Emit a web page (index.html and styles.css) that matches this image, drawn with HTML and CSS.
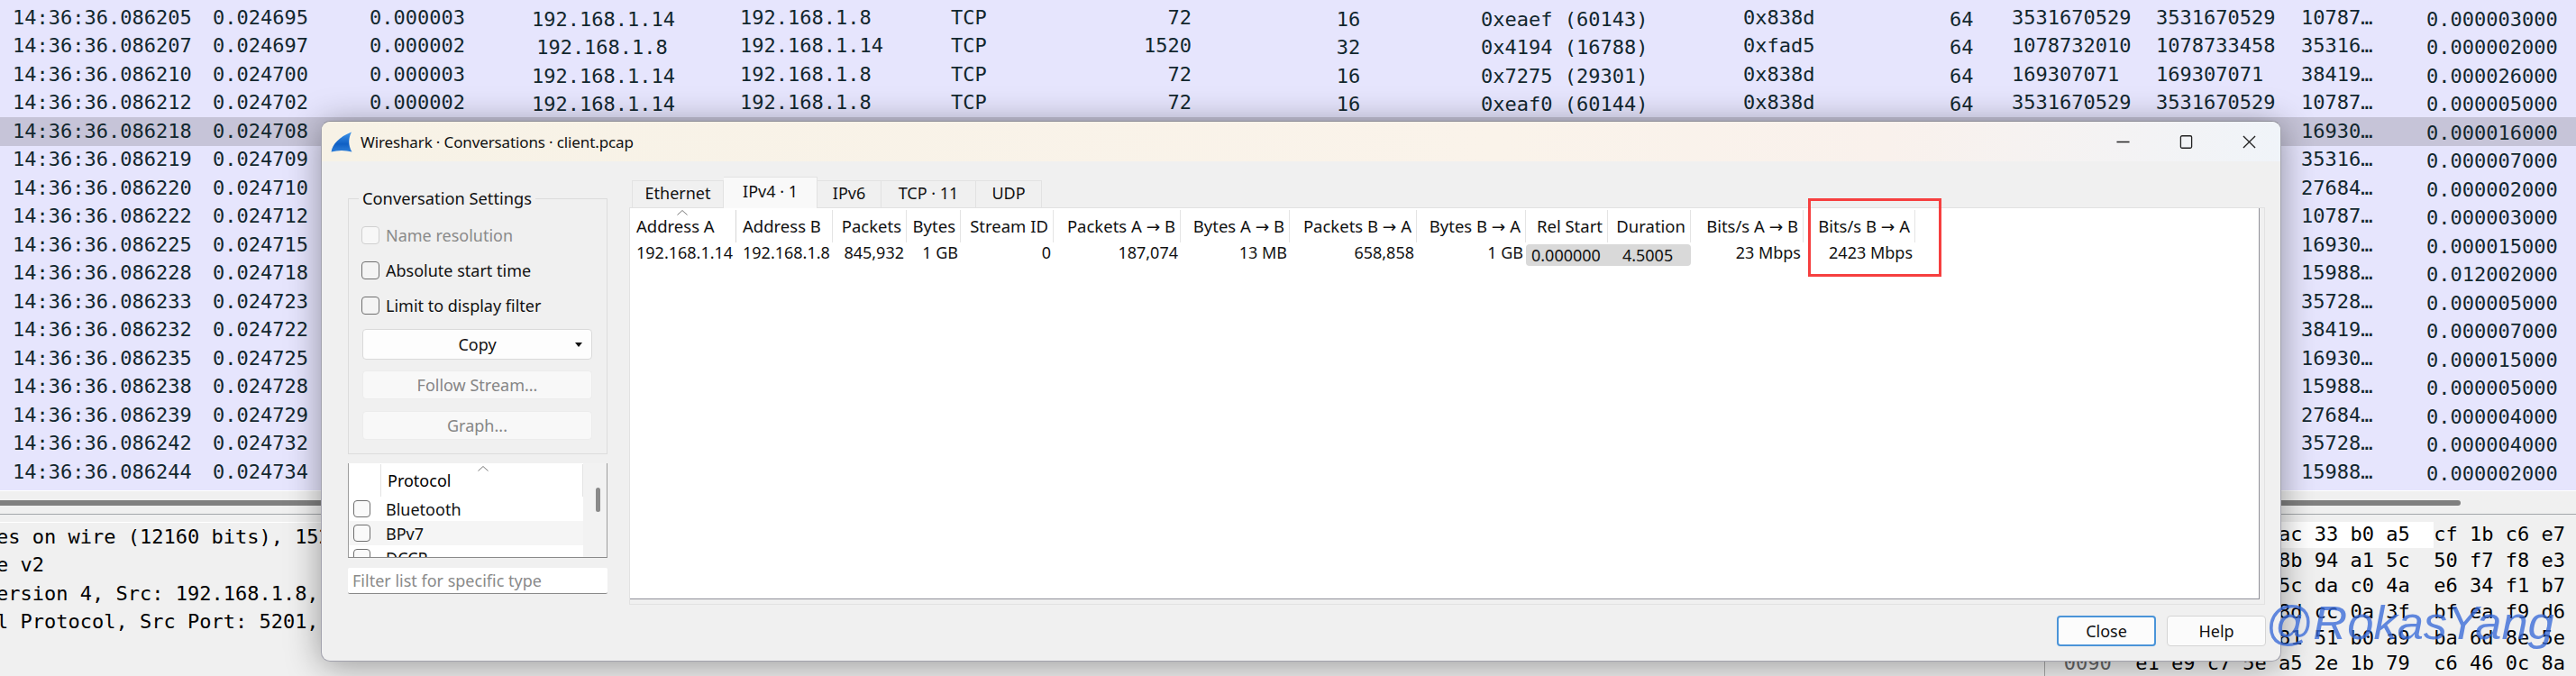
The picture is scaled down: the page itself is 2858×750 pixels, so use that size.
FILE: index.html
```html
<!DOCTYPE html>
<html lang="en">
<head>
<meta charset="utf-8">
<title>Wireshark · Conversations · client.pcap</title>
<link rel="stylesheet" href="styles.css">
</head>
<body>
<main class="app">
  <section class="packets">
    <div class="row"><span class="c1">14:36:36.086205</span><span class="c2">0.024695</span><span class="c3">0.000003</span><span class="c4 low">192.168.1.14</span><span class="c5">192.168.1.8</span><span class="c6">TCP</span><span class="c7">72</span><span class="c8 low">16</span><span class="c9 low">0xeaef (60143)</span><span class="c10">0x838d</span><span class="c11 low">64</span><span class="c12">3531670529</span><span class="c13">3531670529</span><span class="c14">10787…</span><span class="c15 low">0.000003000</span></div>
    <div class="row"><span class="c1">14:36:36.086207</span><span class="c2">0.024697</span><span class="c3">0.000002</span><span class="c4 low">192.168.1.8</span><span class="c5">192.168.1.14</span><span class="c6">TCP</span><span class="c7">1520</span><span class="c8 low">32</span><span class="c9 low">0x4194 (16788)</span><span class="c10">0xfad5</span><span class="c11 low">64</span><span class="c12">1078732010</span><span class="c13">1078733458</span><span class="c14">35316…</span><span class="c15 low">0.000002000</span></div>
    <div class="row"><span class="c1">14:36:36.086210</span><span class="c2">0.024700</span><span class="c3">0.000003</span><span class="c4 low">192.168.1.14</span><span class="c5">192.168.1.8</span><span class="c6">TCP</span><span class="c7">72</span><span class="c8 low">16</span><span class="c9 low">0x7275 (29301)</span><span class="c10">0x838d</span><span class="c11 low">64</span><span class="c12">169307071</span><span class="c13">169307071</span><span class="c14">38419…</span><span class="c15 low">0.000026000</span></div>
    <div class="row"><span class="c1">14:36:36.086212</span><span class="c2">0.024702</span><span class="c3">0.000002</span><span class="c4 low">192.168.1.14</span><span class="c5">192.168.1.8</span><span class="c6">TCP</span><span class="c7">72</span><span class="c8 low">16</span><span class="c9 low">0xeaf0 (60144)</span><span class="c10">0x838d</span><span class="c11 low">64</span><span class="c12">3531670529</span><span class="c13">3531670529</span><span class="c14">10787…</span><span class="c15 low">0.000005000</span></div>
    <div class="row selected"><span class="c1">14:36:36.086218</span><span class="c2">0.024708</span><span class="c14">16930…</span><span class="c15 low">0.000016000</span></div>
    <div class="row"><span class="c1">14:36:36.086219</span><span class="c2">0.024709</span><span class="c14">35316…</span><span class="c15 low">0.000007000</span></div>
    <div class="row"><span class="c1">14:36:36.086220</span><span class="c2">0.024710</span><span class="c14">27684…</span><span class="c15 low">0.000002000</span></div>
    <div class="row"><span class="c1">14:36:36.086222</span><span class="c2">0.024712</span><span class="c14">10787…</span><span class="c15 low">0.000003000</span></div>
    <div class="row"><span class="c1">14:36:36.086225</span><span class="c2">0.024715</span><span class="c14">16930…</span><span class="c15 low">0.000015000</span></div>
    <div class="row"><span class="c1">14:36:36.086228</span><span class="c2">0.024718</span><span class="c14">15988…</span><span class="c15 low">0.012002000</span></div>
    <div class="row"><span class="c1">14:36:36.086233</span><span class="c2">0.024723</span><span class="c14">35728…</span><span class="c15 low">0.000005000</span></div>
    <div class="row"><span class="c1">14:36:36.086232</span><span class="c2">0.024722</span><span class="c14">38419…</span><span class="c15 low">0.000007000</span></div>
    <div class="row"><span class="c1">14:36:36.086235</span><span class="c2">0.024725</span><span class="c14">16930…</span><span class="c15 low">0.000015000</span></div>
    <div class="row"><span class="c1">14:36:36.086238</span><span class="c2">0.024728</span><span class="c14">15988…</span><span class="c15 low">0.000005000</span></div>
    <div class="row"><span class="c1">14:36:36.086239</span><span class="c2">0.024729</span><span class="c14">27684…</span><span class="c15 low">0.000004000</span></div>
    <div class="row"><span class="c1">14:36:36.086242</span><span class="c2">0.024732</span><span class="c14">35728…</span><span class="c15 low">0.000004000</span></div>
    <div class="row"><span class="c1">14:36:36.086244</span><span class="c2">0.024734</span><span class="c14">15988…</span><span class="c15 low">0.000002000</span></div>
  </section>
  <div class="hscroll"><div class="hscroll-thumb"></div></div>
  <section class="lower">
    <div class="details">
      <div class="detail-line">es on wire (12160 bits), 152</div>
      <div class="detail-line">e v2</div>
      <div class="detail-line">ersion 4, Src: 192.168.1.8,</div>
      <div class="detail-line">l Protocol, Src Port: 5201,</div>
    </div>
    <div class="hex">
      <div class="hex-line"><span class="hex-sel">ac 33 b0 a5  </span>cf 1b c6 e7</div>
      <div class="hex-line">8b 94 a1 5c  50 f7 f8 e3</div>
      <div class="hex-line">5c da c0 4a  e6 34 f1 b7</div>
      <div class="hex-line">8d cc 0a 3f  bf ea f9 d6</div>
      <div class="hex-line">81 51 b0 a9  ba 6d 8e 5e</div>
      <div class="hex-line"><span class="hex-off">0090</span>  e1 e9 c7 5e a5 2e 1b 79  c6 46 0c 8a</div>
    </div>
  </section>
</main>

<div class="dialog">
  <header class="titlebar">
    <svg class="fin" viewBox="0 0 24 23" aria-hidden="true">
      <defs><linearGradient id="finfill" x1="0" y1="0" x2="0" y2="1"><stop offset="0" stop-color="#3f95ea"/><stop offset="0.6" stop-color="#0f5fc4"/><stop offset="1" stop-color="#2f7fd8"/></linearGradient></defs>
      <path d="M0.5 22.5C2 14 9 6 23 0.5C19.5 7 19 15 23.5 22.5C16 20.5 8 20.5 0.5 22.5Z" fill="url(#finfill)"/>
    </svg>
    <span class="title">Wireshark · Conversations · client.pcap</span>
    <div class="winctl">
      <svg class="winicon" viewBox="0 0 16 16" aria-hidden="true"><path d="M0.5 8H15.5" stroke="#222" stroke-width="1.4" fill="none"/></svg>
      <svg class="winicon" viewBox="0 0 16 16" aria-hidden="true"><rect x="1.5" y="0.8" width="13" height="14.4" rx="1.6" stroke="#222" stroke-width="1.4" fill="none"/></svg>
      <svg class="winicon" viewBox="0 0 16 16" aria-hidden="true"><path d="M1 1L15 15M15 1L1 15" stroke="#222" stroke-width="1.4" fill="none"/></svg>
    </div>
  </header>
  <div class="dialog-body">
    <aside class="side">
      <fieldset class="group">
        <legend class="group-title">Conversation Settings</legend>
        <div class="check disabled"><span class="box"></span>Name resolution</div>
        <div class="check"><span class="box"></span>Absolute start time</div>
        <div class="check"><span class="box"></span>Limit to display filter</div>
        <div class="btn btn-copy"><span>Copy</span><span class="caret"></span></div>
        <div class="btn btn-off">Follow Stream...</div>
        <div class="btn btn-off">Graph...</div>
      </fieldset>
      <div class="proto-list">
        <div class="proto-main">
          <div class="proto-head">
            <div class="proto-head-check"></div>
            <div class="proto-head-name">Protocol<svg class="sort sort-proto" viewBox="0 0 12 6" aria-hidden="true"><path d="M0.5 5.5L6 0.5L11.5 5.5" fill="none" stroke="#777"/></svg></div>
          </div>
          <div class="proto-row"><span class="box box-small"></span>Bluetooth</div>
          <div class="proto-row alt"><span class="box box-small"></span>BPv7</div>
          <div class="proto-row"><span class="box box-small"></span>DCCP</div>
        </div>
        <div class="proto-scroll"><div class="proto-thumb"></div></div>
      </div>
      <div class="filter">Filter list for specific type</div>
    </aside>
    <div class="content">
      <nav class="tabs">
        <div class="tab tab-eth">Ethernet</div>
        <div class="tab tab-active">IPv4 · 1</div>
        <div class="tab tab-v6">IPv6</div>
        <div class="tab tab-tcp">TCP · 11</div>
        <div class="tab tab-udp">UDP</div>
      </nav>
      <div class="pane">
        <div class="pane-inner">
          <div class="conv">
            <div class="th left addr-a">Address A<svg class="sort sort-addr" viewBox="0 0 12 6" aria-hidden="true"><path d="M0.5 5.5L6 0.5L11.5 5.5" fill="none" stroke="#777"/></svg></div>
            <div class="th left">Address B</div>
            <div class="th">Packets</div>
            <div class="th">Bytes</div>
            <div class="th">Stream ID</div>
            <div class="th">Packets A → B</div>
            <div class="th">Bytes A → B</div>
            <div class="th">Packets B → A</div>
            <div class="th">Bytes B → A</div>
            <div class="th">Rel Start</div>
            <div class="th">Duration</div>
            <div class="th">Bits/s A → B</div>
            <div class="th">Bits/s B → A</div>

            <div class="td left">192.168.1.14</div>
            <div class="td left">192.168.1.8</div>
            <div class="td">845,932</div>
            <div class="td">1 GB</div>
            <div class="td">0</div>
            <div class="td">187,074</div>
            <div class="td">13 MB</div>
            <div class="td">658,858</div>
            <div class="td">1 GB</div>
            <div class="td-time"><span>0.000000</span><span>4.5005</span></div>
            <div class="td">23 Mbps</div>
            <div class="td">2423 Mbps</div>
          </div>
        </div>
      </div>
      <footer class="actions">
        <div class="action action-primary">Close</div>
        <div class="action">Help</div>
      </footer>
    </div>
  </div>
</div>

<div class="redbox"></div>
<div class="watermark">@RokasYang</div>
</body>
</html>
```

FILE: styles.css
```css
* { box-sizing: border-box; }
html, body { margin: 0; padding: 0; }
body {
  width: 2858px;
  height: 750px;
  overflow: hidden;
  position: relative;
  background: #f0f0f0;
  font-family: "Noto Sans", "DejaVu Sans", sans-serif;
  font-size: 18px;
  color: #000;
}

/* background: packet list */
.app { display: flex; flex-direction: column; height: 750px; font-family: "DejaVu Sans Mono", monospace; font-size: 22px; }
.packets { height: 544px; padding-top: 4px; background: #e6e5fd; color: #12272e; overflow: hidden; flex: none; }
.row {
  display: grid;
  grid-template-columns: 222px 174px 180px 231px 234px 167px 100px 321px 291px 229px 69px 160px 161px 139px 166px;
  align-items: center;
  height: 31.5px;
  padding-left: 14px;
  line-height: 24px;
  white-space: pre;
}
.row.selected { background: #c6c4d8; }
.low { padding-top: 4px; }
.c1 { grid-column: 1; } .c2 { grid-column: 2; } .c3 { grid-column: 3; }
.c4 { grid-column: 4; text-align: center; padding-right: 75px; }
.c5 { grid-column: 5; } .c6 { grid-column: 6; }
.c7 { grid-column: 7; text-align: right; }
.c8 { grid-column: 8; text-align: center; padding-left: 27px; }
.c9 { grid-column: 9; } .c10 { grid-column: 10; } .c11 { grid-column: 11; }
.c12 { grid-column: 12; } .c13 { grid-column: 13; } .c14 { grid-column: 14; } .c15 { grid-column: 15; }

.hscroll { flex: none; height: 27px; border-top: 1px solid #fff; border-bottom: 1px solid #a3a7aa; padding-top: 10px; }
.hscroll-thumb { width: 2730px; height: 6px; background: #808080; border-radius: 0 3px 3px 0; }

.lower { flex: 1; display: flex; border-top: 0; padding-top: 8px; min-height: 0; }
.details { flex: 1; border-top: 1px solid #fff; color: #000; overflow: hidden; }
.detail-line { height: 31.4px; line-height: 31.4px; margin-left: -4px; white-space: pre; }
.hex { width: 590px; flex: none; padding-right: 12px; text-align: right; border-left: 1px solid #a9a9a9; color: #000; }
.hex-line { height: 28.7px; line-height: 28.7px; white-space: pre; }
.hex-sel { display: inline-block; background: #fff; height: 28.7px; }
.hex-off { color: #666; }

/* conversations dialog */
.dialog {
  position: absolute;
  left: 356px;
  top: 134px;
  width: 2175px;
  height: 600px;
  background: #f0f0f0;
  border: 1px solid #a2a2ad;
  border-top-color: #8b8b96;
  border-radius: 10px;
  box-shadow: 0 4px 38px rgba(0, 0, 0, 0.38);
  overflow: hidden;
  display: flex;
  flex-direction: column;
}
.titlebar {
  flex: none;
  height: 44px;
  display: flex;
  align-items: center;
  padding-left: 10px;
  background: linear-gradient(90deg, #f7f2e6 0%, #faf3ea 60%, #f9f1ec 80%, #f0f4f9 100%);
}
.fin { width: 24px; height: 23px; flex: none; }
.title { margin-left: 9px; font-size: 17px; letter-spacing: -0.13px; color: #111; }
.winctl { margin-left: auto; display: flex; gap: 55px; padding-right: 27px; }
.winicon { width: 15px; height: 15px; display: block; }

.dialog-body { flex: 1; display: flex; gap: 24px; padding-left: 29px; min-height: 0; }
.side { width: 288px; flex: none; padding-top: 29px; }
.group {
  margin: 0;
  padding: 19px 14px 14px;
  border: 1px solid #dcdcdc;
  min-width: 0;
  height: 296px;
  display: flex;
  flex-direction: column;
}
.group-title { padding: 0 4px; margin-left: -3px; line-height: 24px; color: #111; font-size: 18.3px; }
.check { display: flex; align-items: center; height: 20px; gap: 7px; margin-bottom: 19px; color: #111; }
.check.disabled { color: #8a8a8a; }
.box { width: 20px; height: 20px; flex: none; border: 1px solid #707070; border-radius: 4px; background: #f4f4f4; }
.check.disabled .box { border-color: #d0d0d0; background: #f7f7f7; }
.btn {
  height: 32px;
  margin-bottom: 13px;
  margin-left: 1px;
  width: 255px;
  flex: none;
  display: flex;
  align-items: center;
  justify-content: center;
  border-radius: 4px;
  background: #f8f8f8;
  border: 1px solid #ececec;
  color: #868686;
}
.btn-copy {
  position: relative;
  height: 34px;
  margin-top: -3px;
  margin-bottom: 12px;
  background: #fdfdfd;
  border-color: #dadada;
  color: #111;
}
.caret {
  position: absolute;
  right: 10px;
  top: 14px;
  width: 0;
  height: 0;
  border-left: 4.5px solid transparent;
  border-right: 4.5px solid transparent;
  border-top: 5px solid #111;
}
.proto-list {
  margin-top: 10px;
  height: 105px;
  display: flex;
  overflow: hidden;
  border-left: 1px solid #9d9d9d;
  border-right: 1px solid #9d9d9d;
  border-bottom: 1px solid #8a8a8a;
}
.proto-main { width: 260px; flex: none; background: #fff; }
.proto-head { height: 37px; display: flex; padding-top: 1px; }
.proto-head-check { width: 36px; border-right: 1px solid #e4e4e4; }
.proto-head-name {
  position: relative;
  flex: 1;
  padding-left: 7px;
  line-height: 36px;
  border-right: 1px solid #e4e4e4;
}
.sort { position: absolute; width: 12px; height: 6px; display: block; }
.sort-proto { left: 107px; top: 2px; }
.proto-row { height: 27px; display: flex; align-items: center; gap: 17px; padding-left: 5px; color: #111; background: #fff; }
.proto-row.alt { background: #f5f5f5; }
.box-small { width: 19px; height: 19px; background: #fafafa; }
.proto-scroll { flex: 1; padding: 27px 8px 0 14px; background: #f2f2f2; }
.proto-thumb { width: 5px; height: 27px; border-radius: 3px; background: #8a8a8a; }
.filter {
  margin-top: 11px;
  height: 29px;
  padding-left: 5px;
  line-height: 28px;
  background: #fff;
  border-bottom: 1px solid #8a8a8a;
  color: #8a8a8a;
  border-radius: 2px;
}

.content { width: 1815px; flex: none; padding-top: 17px; display: flex; flex-direction: column; }
.tabs { height: 35px; flex: none; display: flex; align-items: flex-end; padding-left: 3px; margin-bottom: -1px; position: relative; z-index: 1; }
.tab {
  height: 31px;
  display: flex;
  align-items: center;
  justify-content: center;
  padding-bottom: 4px;
  background: #f0f0f0;
  border: 1px solid #e2e2e2;
  border-left-width: 0;
  border-bottom: 1px solid #e2e2e2;
  color: #111;
}
.tab-eth { width: 102px; border-left-width: 1px; }
.tab-active { width: 104px; height: 35px; background: #f9f9f9; border-bottom: 0; padding-bottom: 4px; }
.tab-v6 { width: 71px; }
.tab-tcp { width: 105px; }
.tab-udp { width: 73px; }
.pane {
  height: 441px;
  flex: none;
  border: 1px solid #e2e2e2;
  background: #f0f0f0;
  padding: 0 5px 5px 0;
}
.pane-inner {
  height: 100%;
  background: #fff;
  border-right: 1px solid #8f8f98;
  border-bottom: 1px solid #8f8f98;
}
.conv {
  display: grid;
  grid-template-columns: 118px 107px 82px 60px 103px 141px 121px 141px 121px 91px 92px 125px 124px;
  grid-template-rows: 36px 29px;
  padding-top: 2px;
}
.th {
  border-right: 1px solid #e4e4e4;
  line-height: 36px;
  font-size: 18.5px;
  text-align: right;
  padding-right: 5px;
  white-space: nowrap;
  color: #111;
}
.th.left { text-align: left; padding-left: 7px; }
.addr-a { position: relative; border-right-color: #d6d6d6; }
.sort-addr { left: 52px; top: 0; }
.td { line-height: 22px; text-align: right; padding-right: 3px; white-space: nowrap; color: #111; }
.td.left { text-align: left; padding-left: 7px; padding-right: 0; }
.td-time {
  grid-column: span 2;
  height: 24px;
  margin-top: 2px;
  display: flex;
  align-items: center;
  background: #d9d9d9;
  border-radius: 4px;
  padding-left: 6px;
  gap: 24px;
  color: #111;
}
.actions { margin-top: 12px; display: flex; justify-content: flex-end; gap: 12px; margin-right: -1px; }
.action {
  width: 110px;
  height: 34px;
  display: flex;
  align-items: center;
  justify-content: center;
  background: #fbfbfb;
  border: 1px solid #d4d4d4;
  border-radius: 4px;
  color: #111;
}
.action-primary { border: 2px solid #4a94d8; background: #fcfcfc; }

/* annotations on top of the screenshot */
.redbox { position: absolute; left: 2006px; top: 220px; width: 148px; height: 87px; border: 3px solid #f63f3f; }
.watermark {
  position: absolute;
  left: 2513px;
  top: 658px;
  font-family: "Liberation Sans", sans-serif;
  font-style: italic;
  font-size: 52.5px;
  line-height: 66px;
  color: rgba(55, 105, 215, 0.78);
  white-space: nowrap;
}
```
